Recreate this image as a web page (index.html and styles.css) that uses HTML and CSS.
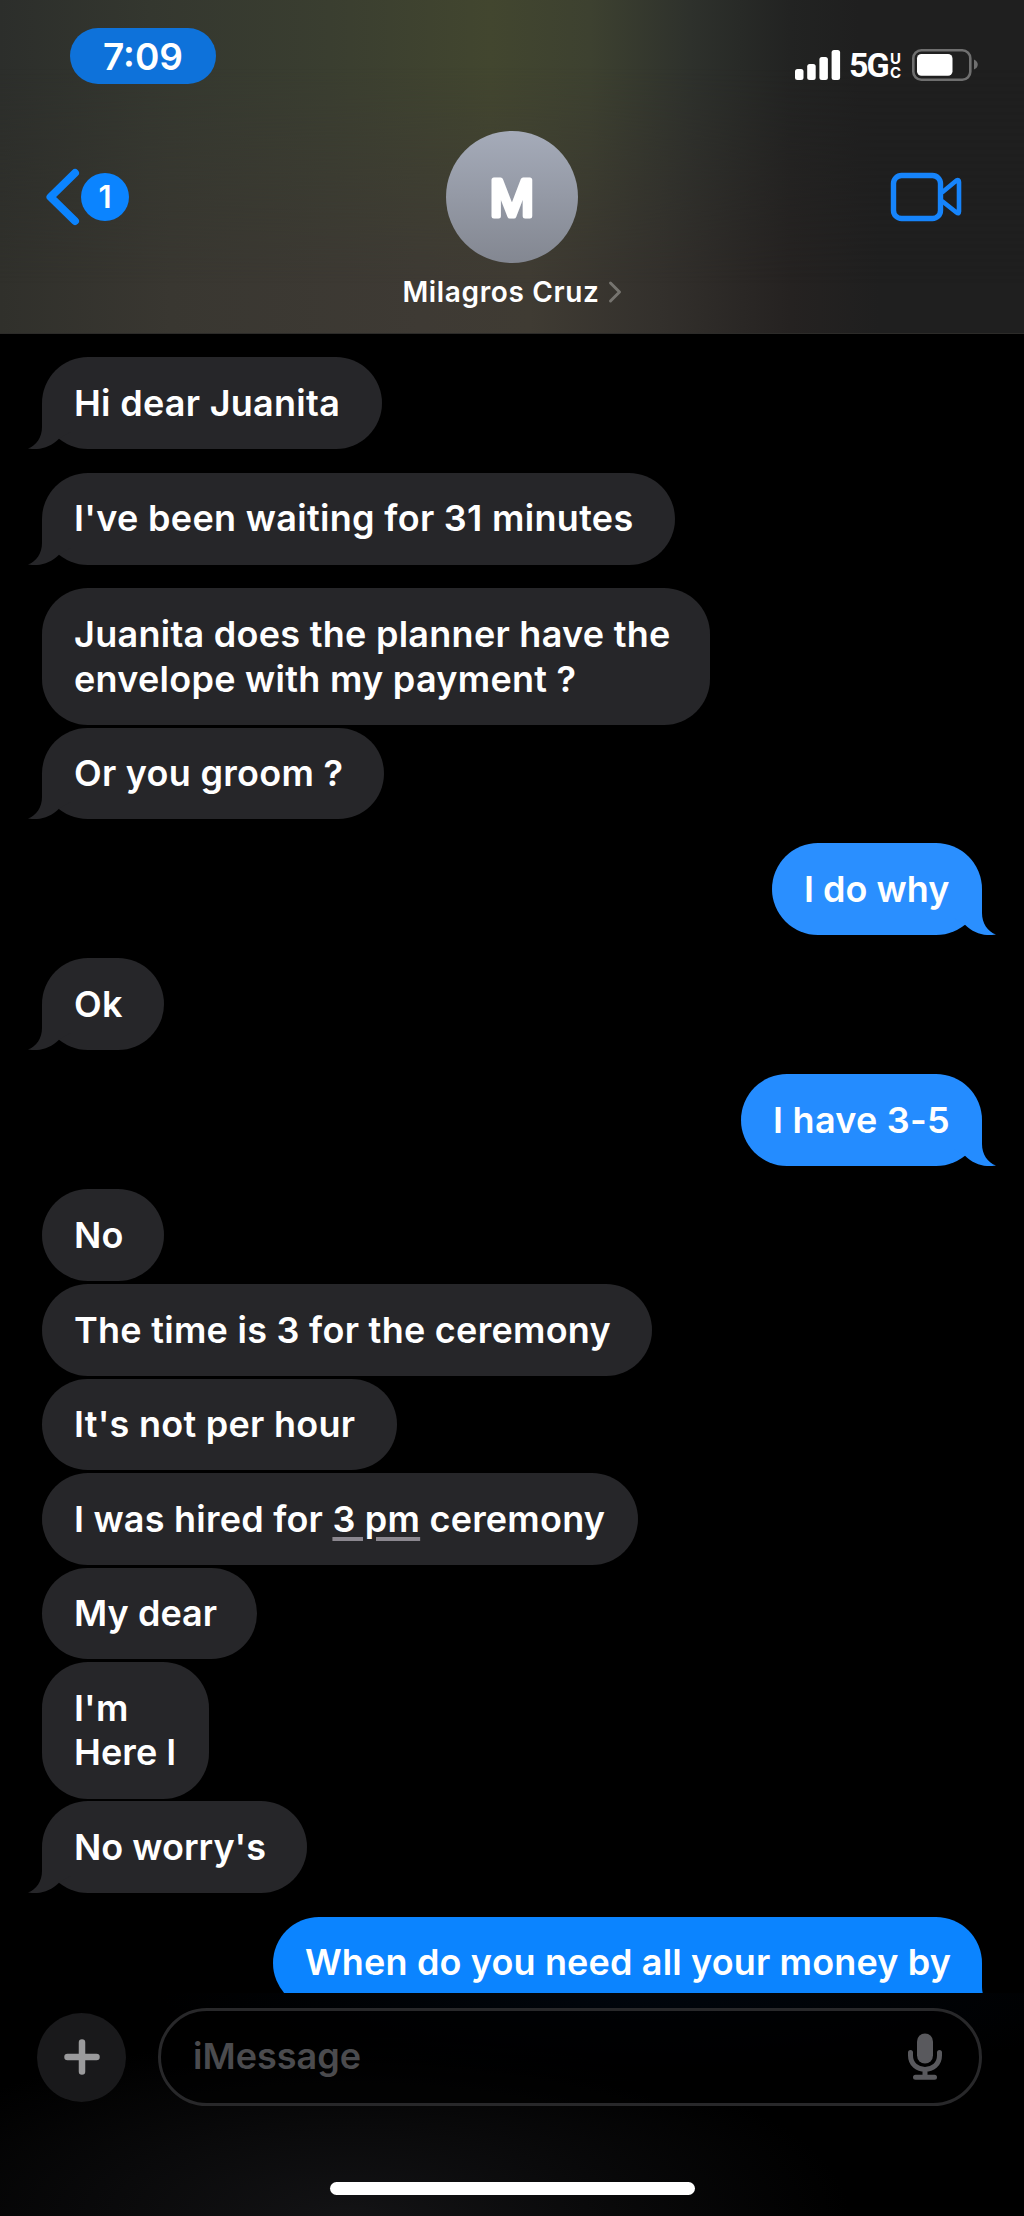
FILE: index.html
```html
<!DOCTYPE html>
<html lang="en">
<head>
<meta charset="utf-8">
<title>Milagros Cruz</title>
<link rel="stylesheet" href="styles.css">
</head>
<body>
<svg class="defs" width="0" height="0" aria-hidden="true">
  <symbol id="tail" viewBox="0 0 44 46">
    <path d="M14 0V24C14 34 8.500 42.500 0 45.500C11 47.500 22 44.500 31 35.700L44 28V0Z"/>
  </symbol>
</svg>
<div class="phone">
  <header class="header">
    <div class="status">
      <div class="clock">7:09</div>
      <div class="indicators">
        <svg class="signal" width="46" height="30" viewBox="0 0 46 30" fill="#fff">
          <rect x="0" y="19" width="8.500" height="11" rx="2.500"/>
          <rect x="12.200" y="14" width="8.500" height="16" rx="2.500"/>
          <rect x="24.400" y="7" width="8.500" height="23" rx="2.500"/>
          <rect x="36.600" y="0" width="8.500" height="30" rx="2.500"/>
        </svg>
        <span class="network">5G</span>
        <span class="carrier"><span>U</span><span>C</span></span>
        <svg class="battery" width="67" height="32" viewBox="0 0 67 32">
          <rect x="1.300" y="1.300" width="57" height="29.400" rx="8" fill="none" stroke="#6f6f6f" stroke-width="2.600"/>
          <rect x="5" y="5" width="35.500" height="21.700" rx="4.500" fill="#fff"/>
          <path d="M62 10.500C67 12.500 67 18.500 62 20.500Z" fill="#6f6f6f"/>
        </svg>
      </div>
    </div>
    <div class="nav">
      <div class="back">
        <svg width="36" height="60" viewBox="0 0 36 60"><path d="M30 6L5.500 30L30 54" fill="none" stroke="#0b84ff" stroke-width="8" stroke-linecap="round" stroke-linejoin="round"/></svg>
        <span class="unread">1</span>
      </div>
      <div class="contact">
        <div class="avatar"><svg width="132" height="132" viewBox="0 0 132 132"><text x="66" y="85" text-anchor="middle">M</text></svg></div>
        <div class="name"><span>Milagros Cruz</span>
          <svg width="14" height="24" viewBox="0 0 14 24"><path d="M2.500 3L11.500 12L2.500 21" fill="none" stroke="#76746f" stroke-width="3" stroke-linecap="round" stroke-linejoin="round"/></svg>
        </div>
      </div>
      <div class="video">
        <svg width="74" height="50" viewBox="0 0 74 50" fill="none" stroke="#1684fb" stroke-linejoin="round"><rect x="3.500" y="3.500" width="47" height="43" rx="8" stroke-width="5.400"/><path d="M52 20.500L66.500 8.500Q69 7 69 10V39.500Q69 42.500 66.500 40.500L52 29" stroke-width="4.600"/></svg>
      </div>
    </div>
  </header>

  <main class="thread">
    <div class="msg in last"><p class="t1">Hi dear Juanita</p><svg class="tail"><use href="#tail"/></svg></div>
    <div class="msg in last"><p class="t2">I've been waiting for 31 minutes</p><svg class="tail"><use href="#tail"/></svg></div>
    <div class="msg in"><p class="t3">Juanita does the planner have the<br>envelope with my payment ?</p></div>
    <div class="msg in last"><p class="t4">Or you groom ?</p><svg class="tail"><use href="#tail"/></svg></div>
    <div class="msg out last light"><p class="t5">I do why</p><svg class="tail"><use href="#tail"/></svg></div>
    <div class="msg in last"><p class="t6">Ok</p><svg class="tail"><use href="#tail"/></svg></div>
    <div class="msg out last mid"><p class="t7">I have 3-5</p><svg class="tail"><use href="#tail"/></svg></div>
    <div class="msg in"><p class="t8">No</p></div>
    <div class="msg in"><p class="t9">The time is 3 for the ceremony</p></div>
    <div class="msg in"><p class="t10">It's not per hour</p></div>
    <div class="msg in"><p class="t11">I was hired for <span class="date">3 pm</span> ceremony</p></div>
    <div class="msg in"><p class="t12">My dear</p></div>
    <div class="msg in"><p class="t13">I'm<br>Here l</p></div>
    <div class="msg in last"><p class="t14">No worry's</p><svg class="tail"><use href="#tail"/></svg></div>
    <div class="msg out last"><p class="t15">When do you need all your money by</p><svg class="tail"><use href="#tail"/></svg></div>
  </main>

  <footer class="composer">
    <div class="bar">
      <div class="plus"><svg width="36" height="36" viewBox="0 0 36 36"><path d="M18 3.500V32.500M3.500 18H32.500" stroke="#9a9a9c" stroke-width="6.500" stroke-linecap="round"/></svg></div>
      <div class="field">
        <span>iMessage</span>
        <svg width="36" height="48" viewBox="0 0 36 48" fill="none" stroke="#59595d" stroke-linecap="round"><rect x="10" y="0.500" width="16" height="30" rx="8" fill="#59595d" stroke="none"/><path d="M3.500 19.500V22.500C3.500 41 32.500 41 32.500 22.500V19.500M18 37V43M8.500 44.300H27.500" stroke-width="5"/></svg>
      </div>
    </div>
    <div class="home"></div>
  </footer>
</div>
</body>
</html>
```
FILE: styles.css
```css
* { box-sizing: border-box; }
body { margin: 0; background: #000; color: #fff; font-family: Inter, "Liberation Sans", sans-serif; }
.defs { display: block; height: 0; }
.phone { width: 1024px; height: 2216px; overflow: hidden; display: flex; flex-direction: column; background: #000; }

.header {
  position: relative;
  isolation: isolate;
  height: 334px;
  flex: none;
  background: linear-gradient(90deg, #30302b 0, #393731 170px, #3e3a34 420px, #3f3b33 530px, #33302c 660px, #252221 790px, #1f1f1f 880px);
  border-bottom: 1px solid #2c2b29;
}
.header::before {
  content: "";
  position: absolute;
  inset: 0;
  z-index: -1;
  background: linear-gradient(90deg, #2c2e2b 0, #34372f 150px, #3a3e30 330px, #42462f 490px, #3d4130 590px, #2e312c 690px, #222322 790px, #1f1f1f 860px);
  mask-image: linear-gradient(#000 20%, transparent 85%);
}
.status { display: flex; justify-content: space-between; padding: 28px 45px 0 70px; }
.clock { width: 146px; height: 56px; border-radius: 28px; background: #0e72da; font-size: 37px; line-height: 57px; font-weight: 600; text-align: center; }
.indicators { display: flex; align-items: center; height: 32px; margin-top: 21px; }
.signal { margin-right: 8px; }
.network { font: 700 34px/32px Roboto, sans-serif; width: 40px; letter-spacing: -2px; }
.carrier { display: flex; flex-direction: column; width: 13px; margin: 2px 9px 0 1px; font: 700 15px/14px Inter, sans-serif; }

.nav { display: grid; grid-template-columns: 1fr 240px 1fr; padding: 47px 45px 0; }
.back { display: flex; align-items: center; height: 132px; }
.unread { width: 48px; height: 48px; border-radius: 50%; background: #0b84ff; font-size: 31px; line-height: 48px; text-align: center; font-weight: 600; }
.contact { display: flex; flex-direction: column; align-items: center; }
.avatar { width: 132px; height: 132px; border-radius: 50%; background: linear-gradient(#a5abb9, #838791); }
.avatar svg { display: block; }
.avatar text { font-size: 49px; font-weight: 400; fill: #fff; stroke: #fff; stroke-width: 5px; stroke-linejoin: round; }
.name { display: flex; align-items: center; gap: 8px; height: 34px; margin-top: 12px; font-size: 28px; font-weight: 600; letter-spacing: .65px; white-space: nowrap; }
.video { display: flex; justify-content: flex-end; align-items: center; height: 132px; padding-right: 15px; }

.thread { flex: none; height: 1659px; overflow: hidden; padding: 23.300px 42px 0; display: flex; flex-direction: column; align-items: flex-start; }
.msg { position: relative; flex: none; margin-bottom: 2.650px; padding: 23.600px 32px; border-radius: 46px; background: #262629; color: #fff; fill: #262629; font-size: 36px; line-height: 44.700px; font-weight: 600; letter-spacing: .27px; white-space: nowrap; }
.msg p { margin: 0; }
.msg.last { margin-bottom: 23.600px; }
.msg.out { align-self: flex-end; background: #0b84ff; fill: #0b84ff; }
.msg.light { background: #2a8fff; fill: #2a8fff; }
.msg.mid { background: #248cff; fill: #248cff; }
.t1 { width: 275.500px; }
.t2 { width: 568.500px; letter-spacing: .31px; }
.t3 { width: 604px; }
.t4 { width: 278px; }
.t5 { width: 146px; letter-spacing: 0; }
.t6 { width: 57.500px; }
.t7 { width: 177px; }
.t8 { width: 58px; }
.t9 { width: 546px; }
.t10 { width: 291px; }
.t11 { width: 532px; letter-spacing: .22px; }
.t12 { width: 151px; letter-spacing: .05px; }
.t13 { width: 103px; letter-spacing: .1px; }
.t14 { width: 201px; letter-spacing: 0; }
.t15 { width: 645px; letter-spacing: .15px; }
.tail { position: absolute; left: -14px; bottom: 0; width: 44px; height: 46px; }
.out .tail { left: auto; right: -14px; transform: scaleX(-1); }
.date { text-decoration: underline #8b878f 4px; text-underline-offset: 5px; }

.composer {
  position: relative;
  height: 223px;
  flex: none;
  background:
    radial-gradient(ellipse 480px 90px at 640px 0, #01060d, transparent),
    radial-gradient(ellipse 500px 180px at 350px 223px, #131315, transparent);
}
.bar { display: flex; align-items: center; gap: 32px; padding: 15px 42px 0 37px; }
.plus { display: grid; place-items: center; flex: none; width: 89px; height: 89px; border-radius: 50%; background: #19191b; }
.field { flex: 1; height: 98px; display: flex; align-items: center; justify-content: space-between; padding: 0 36px 0 32px; border: 3px solid #28282a; border-radius: 50px; background: rgba(0,0,0,.6); color: #4b4b4e; font-size: 36px; font-weight: 600; }
.field span { padding-bottom: 3px; }
.home { width: 365px; height: 13px; border-radius: 7px; background: #fff; margin: 76px auto 0; }
```
